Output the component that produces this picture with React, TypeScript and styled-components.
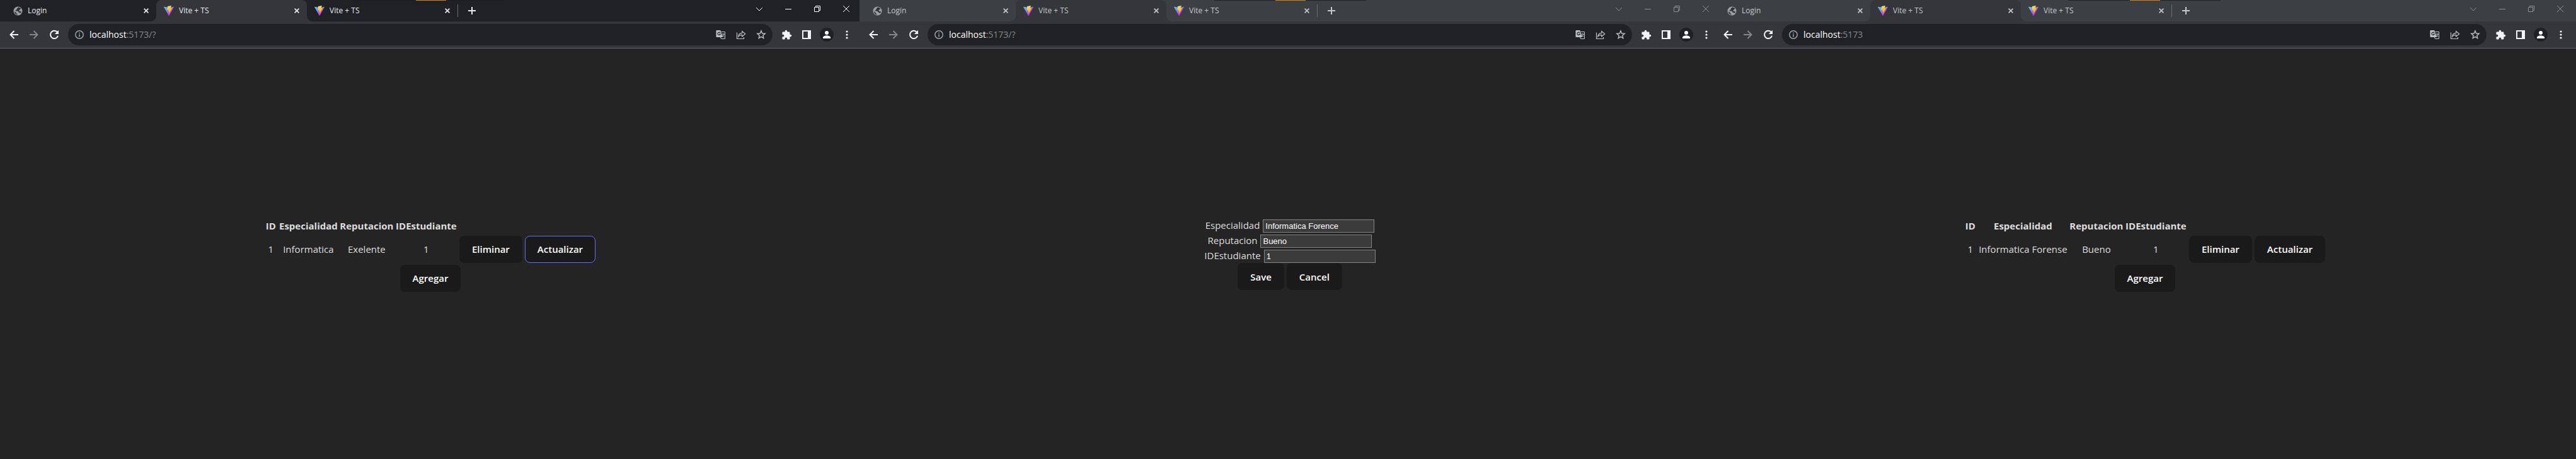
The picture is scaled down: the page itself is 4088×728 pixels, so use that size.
import React from "react";
import styled, { createGlobalStyle, css } from "styled-components";

const ui = `"Open Sans", "Noto Sans", sans-serif`;

const GlobalStyle = createGlobalStyle`
  *, *::before, *::after { box-sizing: border-box; }
  html, body { margin: 0; padding: 0; background: #242424; }
  body { font-family: ${ui}; color: #dedede; }
  button { font-family: inherit; cursor: pointer; }
`;

const Desktop = styled.div`
  display: grid;
  grid-template-columns: 1364fr 1356fr 1368fr;
  min-height: 100vh;
`;

const Window = styled.section`
  display: flex;
  flex-direction: column;
  min-width: 0;
  background: #242424;
`;

const TabStrip = styled.header<{ $focused: boolean }>`
  position: relative;
  display: flex;
  align-items: stretch;
  height: 34px;
  padding-left: 9px;
  background: ${(p) => (p.$focused ? "#202124" : "#3c4043")};
  color: ${(p) => (p.$focused ? "#e8eaed" : "#c4c6c9")};
`;

const Tab = styled.div<{ $active?: boolean }>`
  position: relative;
  display: flex;
  align-items: center;
  gap: 8px;
  width: 239px;
  padding: 0 8px 0 12px;
  font-size: 12px;
  line-height: 16px;
  border-radius: 8px 8px 0 0;
  ${(p) =>
    p.$active &&
    css`
      background: #35363a;
      &::before, &::after {
        content: "";
        position: absolute;
        bottom: 0;
        width: 8px;
        height: 8px;
      }
      &::before {
        right: 100%;
        background: radial-gradient(circle at 0 0, transparent 7px, #35363a 8px);
      }
      &::after {
        left: 100%;
        background: radial-gradient(circle at 100% 0, transparent 7px, #35363a 8px);
      }
    `}
`;

const TabTitle = styled.span`
  flex: 1;
`;

const PlainButton = styled.button<{ $w: number }>`
  display: flex;
  align-items: center;
  justify-content: center;
  flex: none;
  width: ${(p) => p.$w}px;
  height: 24px;
  padding: 0;
  border: 0;
  border-radius: 12px;
  background: transparent;
  color: inherit;
  svg { flex: none; }
`;

const Divider = styled.i`
  align-self: center;
  width: 1px;
  height: 20px;
  margin-right: 10px;
  background: #6b6e72;
`;

const NewTab = styled(PlainButton)`
  align-self: center;
`;

const Peek = styled.div<{ $focused: boolean }>`
  position: absolute;
  top: 0;
  left: 563px;
  display: flex;
  justify-content: center;
  width: 241px;
  height: 1px;
  background: ${(p) => (p.$focused ? "#1f1e1e" : "#202124")};
  &::after {
    content: "";
    width: 48px;
    background: #c98526;
  }
`;

const Controls = styled.div<{ $trail: number; $focused: boolean }>`
  display: flex;
  gap: 34px;
  height: 28px;
  align-items: center;
  margin-left: auto;
  padding-right: ${(p) => p.$trail + 7}px;
  color: ${(p) => (p.$focused ? "#ffffff" : "#8b8e91")};
`;

const Toolbar = styled.nav<{ $trail: number }>`
  display: flex;
  align-items: center;
  height: 43px;
  padding: 0 ${(p) => p.$trail}px 0 6px;
  background: #35363a;
  border-bottom: 1px solid #5f6065;
  color: #f1f3f4;
`;

const Omnibox = styled.div`
  display: flex;
  align-items: center;
  gap: 8px;
  flex: 1;
  height: 34px;
  margin: 0 10px 0 6px;
  padding: 0 6px 0 11px;
  border-radius: 17px;
  background: #202124;
  color: #9aa0a6;
`;

const Address = styled.div`
  flex: 1;
  margin-left: 1px;
  font-size: 14px;
  line-height: 20px;
  color: #85898d;
  b { font-weight: 400; color: #ffffff; }
`;

const Actions = styled.div<{ $tone?: string }>`
  display: flex;
  gap: 8px;
  color: ${(p) => p.$tone ?? "inherit"};
`;

const Avatar = styled(PlainButton)`
  svg { border-radius: 50%; background: #202124; }
`;

const Page = styled.main<{ $shift: number }>`
  display: flex;
  flex: 1;
  flex-direction: column;
  align-items: center;
  justify-content: center;
  padding-left: ${(p) => p.$shift}px;
`;

const DataTable = styled.table<{ $wide: boolean }>`
  border-spacing: 2px;
  font-size: 15px;
  line-height: 24px;
  text-align: center;
  th { padding: 1px 0; font-weight: 700; white-space: nowrap; }
  td { padding: 1px; white-space: nowrap; }
  th:nth-child(1) { width: 20px; }
  th:nth-child(2) { width: ${(p) => (p.$wide ? 143 : 95)}px; }
  th:nth-child(3) { width: 86px; }
  th:nth-child(4) { width: 99px; }
`;

const Action = styled.button<{ $focus?: boolean }>`
  height: 43px;
  padding: 0 19px;
  border: 1px solid ${(p) => (p.$focus ? "#646cff" : "transparent")};
  border-radius: 8px;
  background: #1a1a1a;
  color: #ffffff;
  font-size: 15px;
  font-weight: 600;
  line-height: 22px;
`;

const Form = styled.form`
  display: flex;
  flex-direction: column;
  align-items: center;
`;

const Field = styled.div`
  display: flex;
  align-items: flex-end;
  gap: 5px;
  height: 24px;
  font-size: 15px;
  line-height: 24px;
`;

const TextInput = styled.input`
  width: 177px;
  height: 21px;
  padding: 0 3px;
  border: 1px solid #858585;
  border-radius: 0;
  background: #3b3b3b;
  color: #ffffff;
  font: 13px/16px "Liberation Sans", Arial, sans-serif;
  outline: 0;
`;

const Buttons = styled.div`
  display: flex;
  gap: 4px;
`;

const Globe = () => (
  <svg width="15" height="15" viewBox="0 0 15 15">
    <circle cx="7.5" cy="7.5" r="7" fill="#9aa0a6" />
    <path d="M7.6 1.8 6 3.4v1.3H4.8v1.5H3.6v1.2h3.6l1 1v1.2h1.3l.6.9 2.2.1.9-1.5-1.4-1.1-1.4-.1-.9-.9V5.6h1.7V4.2l1.3-.8A6 6 0 0 0 7.6 1.8ZM2 7.9l2.9 2.4v1.3l1.4.1v1.8A6 6 0 0 1 2 7.9Z" fill="#303235" />
  </svg>
);

const ViteLogo = ({ id }: { id: string }) => (
  <svg width="16" height="16" viewBox="0 0 256 257">
    <defs>
      <linearGradient id={`${id}a`} x1="-.828%" x2="57.636%" y1="7.652%" y2="78.411%">
        <stop offset="0%" stopColor="#41D1FF" />
        <stop offset="100%" stopColor="#BD34FE" />
      </linearGradient>
      <linearGradient id={`${id}b`} x1="43.376%" x2="50.316%" y1="2.242%" y2="89.03%">
        <stop offset="0%" stopColor="#FFEA83" />
        <stop offset="8.333%" stopColor="#FFDD35" />
        <stop offset="100%" stopColor="#FFA800" />
      </linearGradient>
    </defs>
    <path fill={`url(#${id}a)`} d="M255.153 37.938 134.897 252.976c-2.483 4.44-8.862 4.466-11.382.048L.875 37.958c-2.746-4.814 1.371-10.646 6.827-9.67l120.385 21.517a6.537 6.537 0 0 0 2.322-.004l117.867-21.483c5.438-.991 9.574 4.796 6.877 9.62Z" />
    <path fill={`url(#${id}b)`} d="M185.432.063 96.44 17.501a3.268 3.268 0 0 0-2.634 3.014l-5.474 92.456a3.268 3.268 0 0 0 3.997 3.378l24.777-5.718c2.318-.535 4.413 1.507 3.936 3.838l-7.361 36.047c-.495 2.426 1.782 4.5 4.151 3.78l15.304-4.649c2.372-.72 4.652 1.36 4.15 3.788l-11.698 56.621c-.732 3.542 3.979 5.473 5.943 2.437l1.313-2.028 72.516-144.72c1.215-2.423-.88-5.186-3.54-4.672l-25.505 4.922c-2.396.462-4.435-1.77-3.759-4.114l16.646-57.705c.677-2.35-1.37-4.583-3.769-4.113Z" />
  </svg>
);

const Cross = () => (
  <svg width="8" height="8" viewBox="0 0 8 8" stroke="currentColor" strokeWidth="1.7">
    <path d="M.6.6l6.8 6.8M7.4.6.6 7.4" />
  </svg>
);
const Plus = () => (
  <svg width="12" height="12" viewBox="0 0 12 12" stroke="currentColor" strokeWidth="2">
    <path d="M6 0v12M0 6h12" />
  </svg>
);
const Arrow = ({ flip }: { flip?: boolean }) => (
  <svg width="14" height="14" viewBox="0 0 14 14" fill="none" stroke="currentColor" strokeWidth="2">
    <path d={flip ? "M0 7h12.5M6.500 1l6 6-6 6" : "M14 7H1.5M7.500 1l-6 6 6 6"} />
  </svg>
);
const Reload = () => (
  <svg width="16" height="16" viewBox="0 0 16 16">
    <path d="M13 4.2A6.1 6.1 0 1 0 14 9.7" fill="none" stroke="currentColor" strokeWidth="2" />
    <path d="M15 .8V7H8.8Z" fill="currentColor" />
  </svg>
);
const Info = () => (
  <svg width="14" height="14" viewBox="0 0 14 14">
    <circle cx="7" cy="7" r="6.2" fill="none" stroke="currentColor" strokeWidth="1.5" />
    <path d="M6.2 3.4h1.6V5H6.2zM6.2 6.2h1.6v4.4H6.2z" fill="currentColor" />
  </svg>
);
const Translate = () => (
  <svg width="16" height="16" viewBox="0 0 16 16">
    <path d="M1.5 1h5.8l3.5 11H1.5a1 1 0 0 1-1-1V2a1 1 0 0 1 1-1Z" fill="currentColor" />
    <path d="M7 5.1A2.2 2.2 0 1 0 7.3 7H5.3" fill="none" stroke="#202124" strokeWidth="1.1" />
    <path d="M8.4 3.5h6.1V14.5H8.3L7.5 12M9.5 7h4.5M11.7 6v1M13 7c-.4 2-1.4 3.3-3 4.3M10.3 8.3c.6 1.5 1.6 2.5 3 3.2" fill="none" stroke="currentColor" />
  </svg>
);
const Share = () => (
  <svg width="16" height="16" viewBox="0 0 16 16" fill="none" stroke="currentColor" strokeWidth="1.2">
    <path d="M1.5 4.5v10h11v-2.5" />
    <path d="M3.7 11c.4-3.5 2.7-5.4 6-5.6V2.5l5 4.3-5 4.2V8.3C7 8.2 5.2 9 3.7 11Z" />
  </svg>
);
const Star = () => (
  <svg width="16" height="16" viewBox="0 0 16 16" fill="none" stroke="currentColor" strokeWidth="1.4">
    <path d="m8 1.9 1.7 4.1 4.5.4-3.4 2.9 1 4.3L8 11.3l-3.8 2.3 1-4.3L1.8 6.4l4.5-.4Z" />
  </svg>
);
const Puzzle = () => (
  <svg width="17" height="17" viewBox="0 0 24 24" fill="currentColor">
    <path d="M20.5 11H19V7a2 2 0 0 0-2-2h-4V3.5a2.5 2.5 0 0 0-5 0V5H4a2 2 0 0 0-2 2v3.8h1.5a2.7 2.7 0 0 1 0 5.4H2V20a2 2 0 0 0 2 2h3.8v-1.5a2.7 2.7 0 0 1 5.4 0V22H17a2 2 0 0 0 2-2v-4h1.5a2.5 2.5 0 0 0 0-5Z" />
  </svg>
);
const SidePanel = () => (
  <svg width="14" height="14" viewBox="0 0 14 14">
    <path d="M0 0h14v14H0zM2 2v10h7V2z" fill="currentColor" fillRule="evenodd" />
  </svg>
);
const Person = () => (
  <svg width="22" height="22" viewBox="0 0 22 22" fill="#f8f9fa">
    <circle cx="11" cy="8" r="3" />
    <path d="M5 17v-1.5c0-2.3 4-3.3 6-3.3s6 1 6 3.3V17Z" />
  </svg>
);
const Dots = () => (
  <svg width="4" height="14" viewBox="0 0 4 14" fill="currentColor">
    <circle cx="2" cy="2" r="1.6" />
    <circle cx="2" cy="7" r="1.6" />
    <circle cx="2" cy="12" r="1.6" />
  </svg>
);
const Control = ({ d }: { d: string }) => (
  <svg width="12" height="12" viewBox="0 0 12 12" fill="none" stroke="currentColor">
    <path d={d} />
  </svg>
);

const controls = [
  ["Search tabs", "M1 4l5 5 5-5"],
  ["Minimize", "M1 6.5h10"],
  ["Restore", "M1.5 3.5h7v7h-7zM3.5 3.5v-2h7v7h-2"],
  ["Close", "M1 1l10 10M11 1 1 11"],
];
const tabs = ["Login", "Vite + TS", "Vite + TS"];

type BrowserProps = {
  id: string;
  path?: string;
  focused?: boolean;
  trail: number;
  shift?: number;
  children: React.ReactNode;
};

const Browser = ({ id, path = "", focused = false, trail, shift = 0, children }: BrowserProps) => (
  <Window>
    <TabStrip $focused={focused}>
      {tabs.map((title, i) => (
        <Tab key={i} $active={i === 1}>
          {i === 0 ? <Globe /> : <ViteLogo id={id + i} />}
          <TabTitle>{title}</TabTitle>
          <PlainButton $w={16} aria-label="Close tab"><Cross /></PlainButton>
        </Tab>
      ))}
      <Divider />
      <NewTab $w={24} aria-label="New tab"><Plus /></NewTab>
      <Peek $focused={focused} />
      <Controls $trail={trail} $focused={focused}>
        {controls.map(([label, d]) => (
          <PlainButton key={label} $w={12} aria-label={label}><Control d={d} /></PlainButton>
        ))}
      </Controls>
    </TabStrip>
    <Toolbar $trail={trail}>
      <PlainButton $w={32} aria-label="Back"><Arrow /></PlainButton>
      <Actions $tone="#85868a">
        <PlainButton $w={32} aria-label="Forward"><Arrow flip /></PlainButton>
      </Actions>
      <PlainButton $w={32} aria-label="Reload"><Reload /></PlainButton>
      <Omnibox>
        <Info />
        <Address><b>localhost</b>:5173{path}</Address>
        <Actions $tone="#bdc1c6">
          <PlainButton $w={24} aria-label="Translate"><Translate /></PlainButton>
          <PlainButton $w={24} aria-label="Share"><Share /></PlainButton>
          <PlainButton $w={24} aria-label="Bookmark"><Star /></PlainButton>
        </Actions>
      </Omnibox>
      <Actions>
        <PlainButton $w={24} aria-label="Extensions"><Puzzle /></PlainButton>
        <PlainButton $w={24} aria-label="Side panel"><SidePanel /></PlainButton>
        <Avatar $w={24} aria-label="Profile"><Person /></Avatar>
        <PlainButton $w={24} aria-label="Menu"><Dots /></PlainButton>
      </Actions>
    </Toolbar>
    <Page $shift={shift}>{children}</Page>
  </Window>
);

type ListProps = { especialidad: string; reputacion: string; updating?: boolean };

const Listing = ({ especialidad, reputacion, updating = false }: ListProps) => (
  <>
    <DataTable $wide={!updating}>
      <thead>
        <tr>
          <th>ID</th>
          <th>Especialidad</th>
          <th>Reputacion</th>
          <th>IDEstudiante</th>
        </tr>
      </thead>
      <tbody>
        <tr>
          <td>1</td>
          <td>{especialidad}</td>
          <td>{reputacion}</td>
          <td>1</td>
          <td><Action>Eliminar</Action></td>
          <td><Action $focus={updating}>Actualizar</Action></td>
        </tr>
      </tbody>
    </DataTable>
    <Action>Agregar</Action>
  </>
);

const fields = [
  ["Especialidad", "Informatica Forence"],
  ["Reputacion", "Bueno"],
  ["IDEstudiante", "1"],
];

export default function App() {
  return (
    <>
      <GlobalStyle />
      <Desktop>
        <Browser id="list" path="/?" focused trail={8} shift={2}>
          <Listing especialidad="Informatica" reputacion="Exelente" updating />
        </Browser>
        <Browser id="edit" path="/?" trail={0} shift={10}>
          <Form onSubmit={(e) => e.preventDefault()}>
            {fields.map(([label, value]) => (
              <Field key={label}>
                <label htmlFor={label}>{label}</label>
                <TextInput id={label} defaultValue={value} />
              </Field>
            ))}
            <Buttons>
              <Action type="submit">Save</Action>
              <Action type="button">Cancel</Action>
            </Buttons>
          </Form>
        </Browser>
        <Browser id="saved" trail={12}>
          <Listing especialidad="Informatica Forense" reputacion="Bueno" />
        </Browser>
      </Desktop>
    </>
  );
}
